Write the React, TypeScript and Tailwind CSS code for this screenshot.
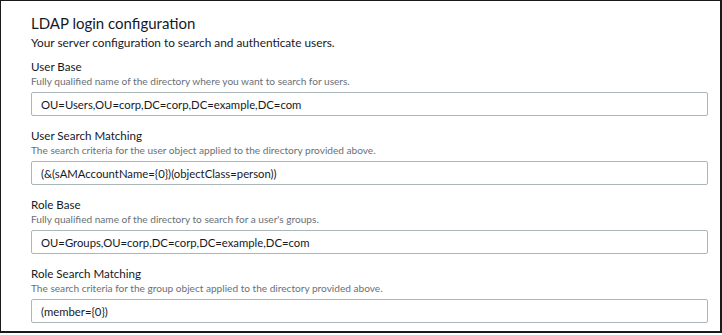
const fields = [
  {
    label: 'User Base',
    description: 'Fully qualified name of the directory where you want to search for users.',
    value: 'OU=Users,OU=corp,DC=corp,DC=example,DC=com',
  },
  {
    label: 'User Search Matching',
    description: 'The search criteria for the user object applied to the directory provided above.',
    value: '(&(sAMAccountName={0})(objectClass=person))',
  },
  {
    label: 'Role Base',
    description: "Fully qualified name of the directory to search for a user's groups.",
    value: 'OU=Groups,OU=corp,DC=corp,DC=example,DC=com',
  },
  {
    label: 'Role Search Matching',
    description: 'The search criteria for the group object applied to the directory provided above.',
    value: '(member={0})',
  },
];

const font = { fontFamily: 'Lato, "Open Sans", sans-serif' };

export default function App() {
  return (
    <div
      className="w-[722px] h-[333px] bg-white border-l border-t border-r-2 border-b-2 border-[#1a1a1a] text-[#16191f]"
      style={font}
    >
      <div className="pl-[30px] pr-[12px] pt-[12px]">
        <h2 className="text-[15px] leading-[20px]">LDAP login configuration</h2>
        <p className="mt-[2px] text-[11.8px] leading-[16px]">
          Your server configuration to search and authenticate users.
        </p>
        <div className="mt-[8px] flex flex-col gap-[12px]">
          {fields.map((f) => (
            <div key={f.label}>
              <div className="text-[11.6px] leading-[15px]">{f.label}</div>
              <div className="text-[10.1px] leading-[14px] text-[#687078]">{f.description}</div>
              <input
                readOnly
                value={f.value}
                className="mt-[4px] block w-full h-[24px] px-[9px] text-[11.3px] text-[#16191f] border border-[#aab7b8] rounded-[2px] outline-none bg-white"
                style={font}
              />
            </div>
          ))}
        </div>
      </div>
    </div>
  );
}
